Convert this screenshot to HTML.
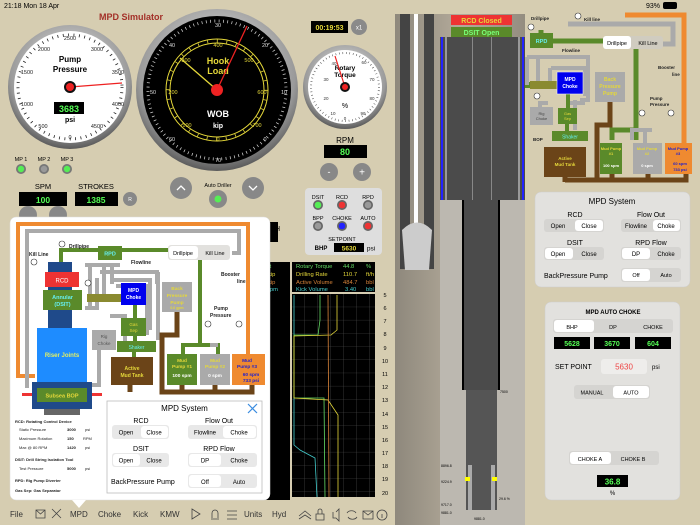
<!DOCTYPE html>
<html><head><meta charset="utf-8"><style>
html,body{margin:0;padding:0;width:700px;height:525px;overflow:hidden;background:#d6cdb1}
svg{display:block;font-family:"Liberation Sans",sans-serif}
</style></head><body>
<svg width="700" height="525" viewBox="0 0 700 525" xmlns="http://www.w3.org/2000/svg">
<defs>
<radialGradient id="bz" cx="50%" cy="40%" r="60%"><stop offset="0" stop-color="#f4f4f4"/><stop offset="0.8" stop-color="#9a9a9a"/><stop offset="1" stop-color="#5a5a5a"/></radialGradient>
<pattern id="grid" width="13" height="13.2" patternUnits="userSpaceOnUse" x="292" y="294"><path d="M13 0V13.2M0 13.2H13" stroke="#555" stroke-width="0.6" fill="none"/></pattern>
<linearGradient id="rock" x1="0" x2="1"><stop offset="0" stop-color="#8e887c"/><stop offset="0.5" stop-color="#b3aa9a"/><stop offset="1" stop-color="#948d80"/></linearGradient>
</defs>
<rect width="700" height="525" fill="#d6cdb1"/>
<text x="4" y="8" font-size="7">21:18   Mon 18 Apr</text>
<text x="660" y="8" font-size="7" text-anchor="end">93%</text>
<rect x="663" y="2" width="14" height="7" rx="2" fill="#000"/>
<text x="131" y="20" font-size="9" font-weight="bold" fill="#a33028" text-anchor="middle">MPD Simulator</text>

<circle cx="70" cy="87" r="62" fill="url(#bz)"/>
<circle cx="70" cy="87" r="56" fill="#fff"/>
<circle cx="70" cy="87" r="52" fill="none" stroke="#222" stroke-width="3" stroke-dasharray="0.8 4.6"/>
<g font-size="5.5" text-anchor="middle" fill="#222">
<text x="70" y="40">2500</text><text x="44" y="51">2000</text><text x="97" y="51">3000</text>
<text x="27" y="74">1500</text><text x="118" y="74">3500</text><text x="27" y="106">1000</text><text x="118" y="106">4000</text>
<text x="43" y="128">500</text><text x="97" y="128">4500</text><text x="70" y="139">0</text></g>
<text x="70" y="62" font-size="8" font-weight="bold" text-anchor="middle">Pump</text>
<text x="70" y="72" font-size="8" font-weight="bold" text-anchor="middle">Pressure</text>
<rect x="54" y="102" width="30" height="12" fill="#000"/>
<text x="69" y="112" font-size="9" font-weight="bold" fill="#5f5" text-anchor="middle">3683</text>
<text x="70" y="122" font-size="7" font-weight="bold" text-anchor="middle">psi</text>
<line x1="70" y1="87" x2="122" y2="83" stroke="#e22" stroke-width="1.3"/>
<circle cx="70" cy="87" r="6" fill="#111"/><circle cx="70" cy="87" r="4" fill="#e22"/>

<circle cx="217" cy="90" r="81" fill="url(#bz)"/>
<circle cx="217" cy="90" r="74" fill="#000"/>
<circle cx="217" cy="90" r="69" fill="none" stroke="#ddd" stroke-width="3" stroke-dasharray="0.7 3.6"/>
<circle cx="217" cy="90" r="51" fill="none" stroke="#e5d83a" stroke-width="1"/>
<circle cx="217" cy="90" r="47" fill="none" stroke="#e5d83a" stroke-width="1"/>
<circle cx="217" cy="90" r="49" fill="none" stroke="#e5d83a" stroke-width="3" stroke-dasharray="0.8 8.8"/>
<g font-size="5.5" text-anchor="middle" fill="#e5d83a">
<text x="218" y="47">400</text><text x="249" y="62">500</text><text x="186" y="62">300</text>
<text x="173" y="94">200</text><text x="262" y="94">600</text><text x="187" y="127">100</text><text x="257" y="127">700</text><text x="218" y="141">0</text></g>
<g font-size="5.5" text-anchor="middle" fill="#ddd">
<text x="218" y="27">30</text><text x="172" y="47">40</text><text x="265" y="47">20</text>
<text x="153" y="94">50</text><text x="284" y="94">10</text><text x="172" y="141">60</text><text x="265" y="141">0</text><text x="218" y="162">70</text></g>
<text x="218" y="64" font-size="9" font-weight="bold" fill="#e5d83a" text-anchor="middle">Hook</text>
<text x="218" y="74" font-size="9" font-weight="bold" fill="#e5d83a" text-anchor="middle">Load</text>
<text x="218" y="117" font-size="9" font-weight="bold" fill="#fff" text-anchor="middle">WOB</text>
<text x="218" y="128" font-size="7" font-weight="bold" fill="#fff" text-anchor="middle">kip</text>
<line x1="217" y1="90" x2="180" y2="58" stroke="#e5d83a" stroke-width="1.3"/>
<line x1="217" y1="90" x2="247" y2="26" stroke="#e22" stroke-width="1.3"/>
<circle cx="217" cy="90" r="6" fill="#e22"/>

<rect x="311" y="21" width="37" height="12" fill="#000"/>
<text x="329.5" y="30" font-size="7" font-weight="bold" fill="#e5d83a" text-anchor="middle">00:19:53</text>
<circle cx="359" cy="27" r="8" fill="#8a8a8a"/><text x="359" y="29.5" font-size="6" fill="#fff" text-anchor="middle">x1</text>

<circle cx="345" cy="87" r="42" fill="url(#bz)"/>
<circle cx="345" cy="87" r="37" fill="#fff"/>
<circle cx="345" cy="87" r="34" fill="none" stroke="#333" stroke-width="2" stroke-dasharray="0.5 3"/>
<g font-size="4.5" text-anchor="middle" fill="#333">
<text x="334" y="65">40</text><text x="364" y="64">60</text><text x="326" y="81">30</text><text x="372" y="81">70</text>
<text x="326" y="100">20</text><text x="372" y="100">80</text><text x="333" y="115">10</text><text x="363" y="115">90</text><text x="345" y="120">0</text></g>
<text x="345" y="70" font-size="6.5" font-weight="bold" text-anchor="middle">Rotary</text>
<text x="345" y="77" font-size="6.5" font-weight="bold" text-anchor="middle">Torque</text>
<text x="345" y="108" font-size="7" text-anchor="middle">%</text>
<line x1="345" y1="87" x2="335" y2="56" stroke="#e22" stroke-width="1.2"/>
<circle cx="345" cy="87" r="5" fill="#111"/><circle cx="345" cy="87" r="3" fill="#e22"/>

<text x="345" y="143" font-size="8" text-anchor="middle">RPM</text>
<rect x="324" y="145" width="43" height="13" fill="#000"/>
<text x="345" y="155" font-size="9" font-weight="bold" fill="#5f5" text-anchor="middle">80</text>
<circle cx="329" cy="172" r="9" fill="#888"/><text x="329" y="175" font-size="9" fill="#fff" text-anchor="middle">-</text>
<circle cx="362" cy="172" r="9" fill="#888"/><text x="362" y="175.5" font-size="10" fill="#fff" text-anchor="middle">+</text>

<g font-size="5.5" text-anchor="middle"><text x="21" y="161">MP 1</text><text x="44" y="161">MP 2</text><text x="67" y="161">MP 3</text></g>
<circle cx="21" cy="169" r="5" fill="#777"/><circle cx="21" cy="169" r="3.2" fill="#5e5"/>
<circle cx="44" cy="169" r="5" fill="#777"/><circle cx="44" cy="169" r="3.2" fill="#999"/>
<circle cx="67" cy="169" r="5" fill="#777"/><circle cx="67" cy="169" r="3.2" fill="#5e5"/>
<text x="43" y="189" font-size="7.5" text-anchor="middle">SPM</text>
<text x="96" y="189" font-size="7.5" text-anchor="middle">STROKES</text>
<rect x="19" y="192" width="48" height="14" fill="#000"/><text x="43" y="203" font-size="8.5" font-weight="bold" fill="#5f5" text-anchor="middle">100</text>
<rect x="75" y="192" width="43" height="14" fill="#000"/><text x="96" y="203" font-size="8.5" font-weight="bold" fill="#5f5" text-anchor="middle">1385</text>
<circle cx="130" cy="199" r="7" fill="#888"/><text x="130" y="201" font-size="5" fill="#fff" text-anchor="middle">R</text>
<circle cx="28" cy="215" r="9" fill="#888"/><circle cx="58" cy="215" r="9" fill="#888"/>
<circle cx="181" cy="188" r="11" fill="#888"/><path d="M177 190l4-4 4 4" stroke="#fff" stroke-width="1.3" fill="none"/>
<circle cx="253" cy="188" r="11" fill="#888"/><path d="M249 186l4 4 4-4" stroke="#fff" stroke-width="1.3" fill="none"/>
<text x="218" y="187" font-size="5.5" text-anchor="middle">Auto Driller</text>
<circle cx="218" cy="199" r="9" fill="#888"/><circle cx="218" cy="199" r="3.5" fill="#5e5"/>
<rect x="258" y="222" width="20" height="20" fill="#000"/>
<text x="275" y="231" font-size="7">H</text>

<rect x="305" y="188" width="77" height="67" rx="4" fill="#dedede"/>
<g font-size="5.5" text-anchor="middle"><text x="318" y="199">DSIT</text><text x="342" y="199">RCD</text><text x="368" y="199">RPD</text>
<text x="318" y="220">BPP</text><text x="342" y="220">CHOKE</text><text x="368" y="220">AUTO</text>
<text x="342" y="241">SETPOINT</text></g>
<g><circle cx="318" cy="205" r="5" fill="#666"/><circle cx="318" cy="205" r="3.3" fill="#5e5"/>
<circle cx="342" cy="205" r="5" fill="#666"/><circle cx="342" cy="205" r="3.3" fill="#e33"/>
<circle cx="368" cy="205" r="5" fill="#666"/><circle cx="368" cy="205" r="3.3" fill="#999"/>
<circle cx="318" cy="226" r="5" fill="#666"/><circle cx="318" cy="226" r="3.3" fill="#999"/>
<circle cx="342" cy="226" r="5" fill="#666"/><circle cx="342" cy="226" r="3.3" fill="#22f"/>
<circle cx="368" cy="226" r="5" fill="#666"/><circle cx="368" cy="226" r="3.3" fill="#e33"/></g>
<text x="321" y="250" font-size="6" font-weight="bold" text-anchor="middle">BHP</text>
<rect x="334" y="243" width="30" height="9" fill="#000"/><text x="349" y="250.5" font-size="6.5" font-weight="bold" fill="#e5d83a" text-anchor="middle">5630</text>
<text x="371" y="250.5" font-size="6.5" text-anchor="middle">psi</text>

<rect x="264" y="262" width="26" height="238" fill="#000"/>
<rect x="292" y="262" width="83" height="30" fill="#000"/>
<rect x="292" y="294" width="83" height="203" fill="#000"/>
<rect x="292" y="294" width="83" height="203" fill="url(#grid)"/>
<g font-size="5.8"><text x="296" y="268" fill="#6d6">Rotary Torque</text><text x="343" y="268" fill="#6d6">44.8</text><text x="366" y="268" fill="#6d6">%</text>
<text x="296" y="276" fill="#e5d83a">Drilling Rate</text><text x="343" y="276" fill="#e5d83a">110.7</text><text x="366" y="276" fill="#e5d83a">ft/h</text>
<text x="296" y="284" fill="#d8843a">Active Volume</text><text x="343" y="284" fill="#d8843a">484.7</text><text x="366" y="284" fill="#d8843a">bbl</text>
<text x="296" y="291" fill="#4cc">Kick Volume</text><text x="345" y="291" fill="#4cc">3.40</text><text x="366" y="291" fill="#4cc">bbl</text>
<text x="268" y="268" fill="#6d6">ft</text><text x="268" y="276" fill="#e5d83a">kip</text><text x="268" y="284" fill="#d8843a">kip</text><text x="268" y="291" fill="#4cc">rpm</text></g>
<polyline points="294,295 294,445 300,450 315,458 317,497" fill="none" stroke="#4cc" stroke-width="0.8"/>
<polyline points="320,295 320,320 318,335 294,335 294,398 324,398 325,497" fill="none" stroke="#6d6" stroke-width="0.8"/>
<polyline points="337,295 337,330 331,335 294,336 294,398 328,400 338,415 338,497" fill="none" stroke="#e5d83a" stroke-width="0.8"/>
<polyline points="328,295 329,497" fill="none" stroke="#d8843a" stroke-width="0.8"/>
<g font-size="5.5" text-anchor="middle"><text x="385" y="297">5</text><text x="385" y="310">6</text><text x="385" y="323">7</text><text x="385" y="336">8</text><text x="385" y="350">9</text><text x="385" y="363">10</text><text x="385" y="376">11</text><text x="385" y="389">12</text><text x="385" y="402">13</text><text x="385" y="416">14</text><text x="385" y="429">15</text><text x="385" y="442">16</text><text x="385" y="455">17</text><text x="385" y="468">18</text><text x="385" y="481">19</text><text x="385" y="495">20</text></g>

<rect x="395" y="14" width="130" height="511" fill="url(#rock)"/>
<rect x="400" y="14" width="10" height="255" fill="#444"/><rect x="414" y="14" width="4" height="255" fill="#fff"/><rect x="424" y="14" width="10" height="255" fill="#444"/>
<path d="M402 230q15 -15 30 0l-3 40h-24z" fill="#ccc"/>
<rect x="440" y="37" width="85" height="163" fill="#4b4b4b"/>
<rect x="441" y="37" width="2" height="163" fill="#22f"/><rect x="522" y="37" width="2" height="163" fill="#22f"/>
<rect x="445" y="37" width="2" height="163" fill="#999"/><rect x="518" y="37" width="2" height="163" fill="#999"/>
<rect x="472" y="37" width="1" height="163" fill="#888"/><rect x="491" y="37" width="1" height="163" fill="#888"/>
<rect x="440" y="200" width="85" height="325" fill="#bcb8b0"/>
<rect x="462" y="200" width="38" height="190" fill="#4b4b4b"/>
<rect x="462" y="200" width="2" height="190" fill="#000"/><rect x="498" y="200" width="2" height="190" fill="#000"/>
<rect x="466" y="390" width="31" height="120" fill="#555"/>
<rect x="468" y="465" width="4" height="45" fill="#aaa"/><rect x="491" y="465" width="4" height="45" fill="#aaa"/>
<rect x="465" y="477" width="5" height="4" fill="#ff0"/><rect x="492" y="477" width="5" height="4" fill="#ff0"/>
<g font-size="3.5"><text x="441" y="467">8896.8</text><text x="441" y="483">9224.9</text><text x="441" y="506">9717.0</text><text x="441" y="514">9881.0</text><text x="500" y="393">7500</text><text x="499" y="500">29.6 %</text><text x="474" y="520">9881.0</text></g>
<rect x="451" y="15" width="61" height="10" fill="#e33"/><text x="481.5" y="23" font-size="7" font-weight="bold" fill="#e5d83a" text-anchor="middle">RCD Closed</text>
<rect x="451" y="27" width="61" height="10" fill="#5a8a2a"/><text x="481.5" y="35" font-size="7" font-weight="bold" fill="#7f7" text-anchor="middle">DSIT Open</text>

<g fill="none" stroke-width="5">
<path d="M625 15H684V148" stroke="#ef8a30"/>
<path d="M568 24H673V44H663" stroke="#aaa"/>
<path d="M541 30V40M553 41H603M636 49V140M612 140V130H638" stroke="#5a8a2a"/>
<path d="M525 85H555" stroke="#5a8a2a" stroke-width="6"/>
<path d="M527 57H588V100H580M538 57V85M550 68V85M551 68H585V96M527 57V85M575 100V130M570 103H585M548 103H540V107M652 130H632V140M645 130V143" stroke="#aaa" stroke-width="4"/>
<path d="M568 94V110M567 124V132" stroke="#5a8a2a" stroke-width="4"/>
<path d="M610 102V125H597V182M565 180H686V174M612 174V182M648 174V182M565 177V182" stroke="#6b4418" stroke-width="5"/>
</g>
<rect x="530" y="33" width="23" height="15" fill="#5a8a2a"/><text x="541.5" y="43" font-size="5.5" font-weight="bold" fill="#6ee" text-anchor="middle">RPD</text>
<rect x="530" y="81" width="27" height="8" fill="#8a8a30"/>
<rect x="603" y="36" width="60" height="13" rx="3" fill="#d0ccc0"/><rect x="603" y="36" width="28" height="13" rx="3" fill="#fff"/>
<text x="617" y="45" font-size="5.5" text-anchor="middle">Drillpipe</text><text x="648" y="45" font-size="5.5" text-anchor="middle">Kill Line</text>
<rect x="557" y="72" width="26" height="22" fill="#00e" stroke="#eee" stroke-width="0.6"/><text x="570" y="81" font-size="5" font-weight="bold" fill="#fff" text-anchor="middle">MPD</text><text x="570" y="88" font-size="5" font-weight="bold" fill="#fff" text-anchor="middle">Choke</text>
<rect x="595" y="72" width="30" height="30" fill="#aaa"/><g font-size="5" font-weight="bold" fill="#e5d83a" text-anchor="middle"><text x="610" y="81">Back</text><text x="610" y="88">Pressure</text><text x="610" y="95">Pump</text></g>
<rect x="530" y="107" width="23" height="18" fill="#aaa"/><text x="541.5" y="115" font-size="4" fill="#444" text-anchor="middle">Rig</text><text x="541.5" y="120" font-size="4" fill="#444" text-anchor="middle">Choke</text>
<rect x="558" y="108" width="19" height="16" fill="#5a8a2a"/><text x="567.5" y="115" font-size="4" fill="#e5d83a" text-anchor="middle">Gas</text><text x="567.5" y="120" font-size="4" fill="#e5d83a" text-anchor="middle">Sep</text>
<rect x="552" y="131" width="36" height="10" fill="#5a8a2a"/><text x="570" y="138.5" font-size="5" fill="#6ee" text-anchor="middle">Shaker</text>
<rect x="544" y="147" width="42" height="30" fill="#6b4418"/><text x="565" y="160" font-size="4.5" font-weight="bold" fill="#e5d83a" text-anchor="middle">Active</text><text x="565" y="166" font-size="4.5" font-weight="bold" fill="#e5d83a" text-anchor="middle">Mud Tank</text>
<rect x="600" y="143" width="22" height="31" fill="#5a8a2a"/><g font-size="4" font-weight="bold" fill="#e5d83a" text-anchor="middle"><text x="611" y="150">Mud Pump</text><text x="611" y="155">#1</text><text x="611" y="167" fill="#fff">100 spm</text></g>
<rect x="633" y="143" width="29" height="31" fill="#aaa"/><g font-size="4" font-weight="bold" fill="#e5d83a" text-anchor="middle"><text x="647" y="150">Mud Pump</text><text x="647" y="155">#2</text><text x="647" y="167" fill="#fff">0 spm</text></g>
<rect x="665" y="143" width="27" height="31" fill="#ef8a30"/><g font-size="4" font-weight="bold" fill="#22c" text-anchor="middle"><text x="678" y="150">Mud Pump</text><text x="678" y="155">#3</text><text x="680" y="165">60 spm</text><text x="680" y="171">733 psi</text></g>
<g font-size="4.5" font-weight="bold" fill="#222"><text x="531" y="20">Drillpipe</text><text x="584" y="21">Kill line</text><text x="562" y="52">Flowline</text><text x="658" y="69">Booster</text><text x="672" y="76">line</text><text x="650" y="100">Pump</text><text x="650" y="106">Pressure</text><text x="533" y="141">BOP</text></g>
<g fill="#fff" stroke="#333" stroke-width="0.6"><circle cx="531" cy="27" r="3"/><circle cx="578" cy="16" r="3"/><circle cx="537" cy="96" r="3"/><circle cx="642" cy="113" r="3"/><circle cx="671" cy="113" r="3"/></g>

<rect x="535" y="192" width="155" height="95" rx="6" fill="#e2e1de" stroke="#ccc" stroke-width="0.5"/>
<text x="612" y="204" font-size="8" text-anchor="middle">MPD System</text>
<g font-size="7" text-anchor="middle"><text x="575" y="217">RCD</text><text x="651" y="217">Flow Out</text><text x="575" y="245">DSIT</text><text x="651" y="245">RPD Flow</text></g>
<rect x="544" y="219" width="60" height="13" rx="3" fill="#d5d4d1"/><rect x="575" y="220" width="28" height="11" rx="3" fill="#fff"/>
<g font-size="6" text-anchor="middle"><text x="558" y="228">Open</text><text x="589" y="228">Close</text></g>
<rect x="621" y="219" width="60" height="13" rx="3" fill="#d5d4d1"/><rect x="653" y="220" width="27" height="11" rx="3" fill="#fff"/>
<g font-size="6" text-anchor="middle"><text x="636" y="228">Flowline</text><text x="666" y="228">Choke</text></g>
<rect x="544" y="247" width="60" height="13" rx="3" fill="#d5d4d1"/><rect x="545" y="248" width="28" height="11" rx="3" fill="#fff"/>
<g font-size="6" text-anchor="middle"><text x="558" y="256">Open</text><text x="589" y="256">Close</text></g>
<rect x="621" y="247" width="60" height="13" rx="3" fill="#d5d4d1"/><rect x="622" y="248" width="28" height="11" rx="3" fill="#fff"/>
<g font-size="6" text-anchor="middle"><text x="636" y="256">DP</text><text x="666" y="256">Choke</text></g>
<text x="544" y="278" font-size="7">BackPressure Pump</text>
<rect x="621" y="268" width="60" height="14" rx="3" fill="#d5d4d1"/><rect x="622" y="269" width="28" height="12" rx="3" fill="#fff"/>
<g font-size="5.5" text-anchor="middle"><text x="636" y="277">Off</text><text x="666" y="277">Auto</text></g>

<rect x="545" y="302" width="135" height="198" rx="6" fill="#e2e1de" stroke="#ccc" stroke-width="0.5"/>
<text x="613" y="314" font-size="6" font-weight="bold" text-anchor="middle">MPD AUTO CHOKE</text>
<rect x="553" y="319" width="120" height="14" rx="3" fill="#d5d4d1"/><rect x="554" y="320" width="40" height="12" rx="3" fill="#fff"/>
<g font-size="5.5" text-anchor="middle"><text x="572" y="329">BHP</text><text x="613" y="329">DP</text><text x="653" y="329">CHOKE</text></g>
<rect x="554" y="337" width="36" height="12" fill="#000"/><rect x="594" y="337" width="36" height="12" fill="#000"/><rect x="635" y="337" width="36" height="12" fill="#000"/>
<g font-size="7" font-weight="bold" fill="#5f5" text-anchor="middle"><text x="572" y="346">5628</text><text x="612" y="346">3670</text><text x="653" y="346">604</text></g>
<text x="555" y="369" font-size="7">SET POINT</text>
<rect x="601" y="359" width="46" height="15" rx="3" fill="#eeedeb"/><text x="624" y="369.5" font-size="8" fill="#e44" text-anchor="middle">5630</text>
<text x="652" y="369" font-size="6">psi</text>
<rect x="574" y="385" width="76" height="14" rx="3" fill="#d5d4d1"/><rect x="613" y="386" width="36" height="12" rx="3" fill="#fff"/>
<g font-size="5.5" text-anchor="middle"><text x="592" y="394.5">MANUAL</text><text x="631" y="394.5">AUTO</text></g>
<rect x="569" y="451" width="90" height="14" rx="3" fill="#d5d4d1"/><rect x="570" y="452" width="41" height="12" rx="3" fill="#fff"/>
<g font-size="5.5" text-anchor="middle"><text x="590" y="461">CHOKE A</text><text x="633" y="461">CHOKE B</text></g>
<rect x="597" y="475" width="31" height="12" fill="#000"/><text x="612.5" y="484.5" font-size="8" font-weight="bold" fill="#5f5" text-anchor="middle">36.8</text>
<text x="612.5" y="495" font-size="6" text-anchor="middle">%</text>

<rect x="10" y="217" width="260" height="283" rx="6" fill="#fff" stroke="#ddd" stroke-width="0.5"/>
<path d="M72 500l7 8 7-8z" fill="#fff"/>
<g fill="none">
<path d="M35 376H18V224H248V360" stroke="#ef8a30" stroke-width="4"/>
<path d="M27 388V231H239V253H232" stroke="#aaa" stroke-width="4"/>
<path d="M61 263V250H170" stroke="#5a8a2a" stroke-width="4"/>
<path d="M200 260V345H183V355M200 345H218V355" stroke="#5a8a2a" stroke-width="4"/>
<path d="M210 345H218" stroke="#aaa" stroke-width="4"/>
<path d="M85 265H120M104 265V296M90 265V308M112 264V284M85 308H97V278M100 272H157V284M111 280H150V330M116 286H147V335M158 272V340M110 316H125V345M99 350V385H92" stroke="#aaa" stroke-width="4"/>
<path d="M87 298H125V304" stroke="#8a8a30" stroke-width="8"/>
<path d="M135 305V320M135 335V342M134 351V357" stroke="#5a8a2a" stroke-width="4"/>
<path d="M177 312V335H162V392H252V385M130 385V392M182 385V392M215 385V392" stroke="#6b4418" stroke-width="5"/>
</g>
<rect x="48" y="262" width="24" height="67" fill="#1f4a8a"/>
<rect x="45" y="272" width="34" height="15" fill="#e33"/><text x="62" y="282.5" font-size="6" fill="#fff" text-anchor="middle">RCD</text>
<rect x="43" y="290" width="39" height="20" fill="#5a8a2a"/><text x="62.5" y="299" font-size="5.5" font-weight="bold" fill="#6ee" text-anchor="middle">Annular</text><text x="62.5" y="306" font-size="5.5" font-weight="bold" fill="#6ee" text-anchor="middle">(DSIT)</text>
<rect x="37" y="328" width="50" height="58" fill="#1e8cff"/><text x="62" y="357" font-size="6" font-weight="bold" fill="#e5f060" text-anchor="middle">Riser Joints</text>
<rect x="22" y="393" width="80" height="3" fill="#e33"/>
<rect x="32" y="382" width="60" height="27" fill="#1f4a8a"/>
<rect x="37" y="388" width="50" height="14" fill="#5a8a2a"/><text x="62" y="397.5" font-size="5.5" font-weight="bold" fill="#e5d83a" text-anchor="middle">Subsea BOP</text>
<rect x="44" y="409" width="36" height="6" fill="#666"/>
<rect x="98" y="246" width="24" height="14" fill="#5a8a2a"/><text x="110" y="255.5" font-size="5.5" font-weight="bold" fill="#6ee" text-anchor="middle">RPD</text>
<rect x="168" y="245" width="62" height="15" rx="3" fill="#e2e1de"/><rect x="169" y="246" width="29" height="13" rx="3" fill="#fff"/>
<text x="183" y="255" font-size="5.5" text-anchor="middle">Drillpipe</text><text x="215" y="255" font-size="5.5" text-anchor="middle">Kill Line</text>
<rect x="121" y="283" width="25" height="22" fill="#00e"/><text x="133.5" y="292" font-size="5" font-weight="bold" fill="#fff" text-anchor="middle">MPD</text><text x="133.5" y="299" font-size="5" font-weight="bold" fill="#fff" text-anchor="middle">Choke</text>
<rect x="162" y="282" width="30" height="30" fill="#aaa"/><g font-size="4.8" font-weight="bold" fill="#e5d83a" text-anchor="middle"><text x="177" y="290">Back</text><text x="177" y="297">Pressure</text><text x="177" y="304">Pump</text><text x="177" y="309" font-size="3.5">0.0 gpm</text></g>
<rect x="92" y="330" width="24" height="20" fill="#aaa"/><text x="104" y="338" font-size="4.5" fill="#555" text-anchor="middle">Rig</text><text x="104" y="345" font-size="4.5" fill="#555" text-anchor="middle">Choke</text>
<rect x="121" y="318" width="25" height="18" fill="#5a8a2a"/><text x="133.5" y="326" font-size="4.5" fill="#e5d83a" text-anchor="middle">Gas</text><text x="133.5" y="332" font-size="4.5" fill="#e5d83a" text-anchor="middle">Sep</text>
<rect x="117" y="341" width="39" height="11" fill="#5a8a2a"/><text x="136.5" y="349" font-size="5" fill="#6ee" text-anchor="middle">Shaker</text>
<rect x="111" y="357" width="42" height="28" fill="#6b4418"/><text x="132" y="370" font-size="5" font-weight="bold" fill="#e5d83a" text-anchor="middle">Active</text><text x="132" y="377" font-size="5" font-weight="bold" fill="#e5d83a" text-anchor="middle">Mud Tank</text>
<rect x="167" y="354" width="30" height="31" fill="#5a8a2a"/><g font-size="4.8" font-weight="bold" fill="#e5d83a" text-anchor="middle"><text x="182" y="362">Mud</text><text x="182" y="368">Pump #1</text><text x="182" y="377" fill="#fff">100 spm</text></g>
<rect x="200" y="354" width="30" height="31" fill="#aaa"/><g font-size="4.8" font-weight="bold" fill="#e5d83a" text-anchor="middle"><text x="215" y="362">Mud</text><text x="215" y="368">Pump #2</text><text x="215" y="377" fill="#fff">0 spm</text></g>
<rect x="232" y="354" width="33" height="31" fill="#ef8a30"/><g font-size="4.8" font-weight="bold" fill="#22c" text-anchor="middle"><text x="247" y="362">Mud</text><text x="247" y="368">Pump #3</text><text x="251" y="376">60 spm</text><text x="251" y="382">733 psi</text></g>
<g font-size="5" font-weight="bold" fill="#222"><text x="69" y="248">Drillpipe</text><text x="29" y="256">Kill Line</text><text x="131" y="264">Flowline</text><text x="221" y="276">Booster</text><text x="237" y="283">line</text><text x="214" y="310">Pump</text><text x="210" y="317">Pressure</text></g>
<g fill="#fff" stroke="#333" stroke-width="0.6"><circle cx="62" cy="244" r="3"/><circle cx="34" cy="262" r="3"/><circle cx="88" cy="283" r="3"/><circle cx="208" cy="324" r="3"/><circle cx="239" cy="324" r="3"/></g>
<g font-size="4" fill="#222"><text x="15" y="423" font-weight="bold">RCD: Rotating Control Device</text>
<text x="19" y="431">Static Pressure</text><text x="67" y="431" font-weight="bold">3000</text><text x="85" y="431">psi</text>
<text x="19" y="440">Maximum Rotation</text><text x="67" y="440" font-weight="bold">150</text><text x="83" y="440">RPM</text>
<text x="19" y="449">Max @  80  RPM</text><text x="67" y="449" font-weight="bold">1420</text><text x="85" y="449">psi</text>
<text x="15" y="461" font-weight="bold">DSIT: Drill String Isolation Tool</text>
<text x="19" y="470">Test Pressure</text><text x="67" y="470" font-weight="bold">5000</text><text x="85" y="470">psi</text>
<text x="15" y="482" font-weight="bold">RPD: Rig Pump Diverter</text>
<text x="15" y="492" font-weight="bold">Gas Sep: Gas Separator</text></g>
<rect x="107" y="401" width="155" height="92" fill="#fff" stroke="#bbb" stroke-width="0.8"/>
<text x="184.5" y="411" font-size="8" text-anchor="middle">MPD System</text>
<path d="M248 404l9 9M257 404l-9 9" stroke="#3a8ce0" stroke-width="1.2"/>
<g font-size="7" text-anchor="middle"><text x="141" y="423">RCD</text><text x="219" y="423">Flow Out</text><text x="141" y="451">DSIT</text><text x="219" y="451">RPD Flow</text></g>
<rect x="112" y="425" width="57" height="14" rx="3" fill="#e8e8e8"/><rect x="141" y="426" width="27" height="12" rx="3" fill="#fff"/>
<g font-size="6" text-anchor="middle"><text x="126" y="434.5">Open</text><text x="154" y="434.5">Close</text></g>
<rect x="188" y="425" width="69" height="14" rx="3" fill="#e8e8e8"/><rect x="223" y="426" width="33" height="12" rx="3" fill="#fff"/>
<g font-size="6" text-anchor="middle"><text x="205" y="434.5">Flowline</text><text x="239" y="434.5">Choke</text></g>
<rect x="112" y="453" width="57" height="14" rx="3" fill="#e8e8e8"/><rect x="113" y="454" width="27" height="12" rx="3" fill="#fff"/>
<g font-size="6" text-anchor="middle"><text x="126" y="462.5">Open</text><text x="154" y="462.5">Close</text></g>
<rect x="188" y="453" width="69" height="14" rx="3" fill="#e8e8e8"/><rect x="189" y="454" width="32" height="12" rx="3" fill="#fff"/>
<g font-size="6" text-anchor="middle"><text x="205" y="462.5">DP</text><text x="239" y="462.5">Choke</text></g>
<text x="111" y="484" font-size="7">BackPressure Pump</text>
<rect x="188" y="474" width="69" height="14" rx="3" fill="#e8e8e8"/><rect x="189" y="475" width="32" height="12" rx="3" fill="#fff"/>
<g font-size="6" text-anchor="middle"><text x="205" y="484">Off</text><text x="239" y="484">Auto</text></g>

<g font-size="8" fill="#333"><text x="10" y="517">File</text><text x="70" y="517">MPD</text><text x="98" y="517">Choke</text><text x="133" y="517">Kick</text><text x="160" y="517">KMW</text><text x="244" y="517">Units</text><text x="272" y="517">Hyd</text></g>
<g fill="none" stroke="#444" stroke-width="0.8">
<path d="M36 510h9v8h-9z M36 510l4.5 4 4.5-4"/>
<path d="M52 509l9 9M61 509l-9 9"/>
<path d="M192 509l8 5-8 5z"/>
<path d="M211 519h8M212 518v-5a3 3 0 0 1 6 0v5"/>
<path d="M227 511h10M227 515h10M227 519h10"/>
<path d="M299 516l6-5 6 5M299 519l6-4 6 4"/>
<path d="M316 514h8v6h-8zM318 514v-3a2 2 0 0 1 4 0v3"/>
<path d="M333 512v6h3l3 3v-12l-3 3"/>
<path d="M347 513a5 4 0 0 1 9 0M357 517a5 4 0 0 1-9 0"/>
<path d="M363 511h10v8h-10zM363 511l5 4 5-4"/>
<circle cx="382" cy="515" r="5"/><path d="M382 514v4"/>
</g>
</svg>
</body></html>
